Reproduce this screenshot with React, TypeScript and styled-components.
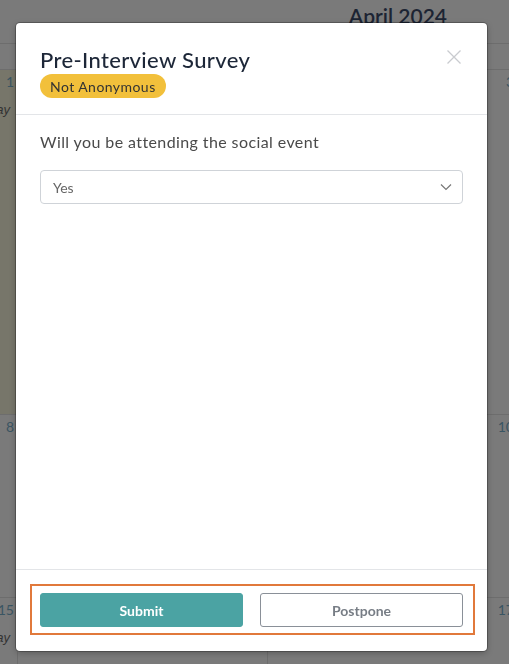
import React from "react";
import styled, { createGlobalStyle } from "styled-components";

const GlobalStyle = createGlobalStyle`
  html, body { margin: 0; padding: 0; }
  body {
    background: #7a7a7a;
    font-family: Lato, "Liberation Sans", Arial, sans-serif;
    overflow: hidden;
  }
  * { box-sizing: border-box; }
`;

const Page = styled.div`
  width: 509px;
  height: 664px;
  overflow: hidden;
  background: #7a7a7a;
`;

const CalTitleBar = styled.div`
  height: 44px;
  border-bottom: 1px solid #6d6d6d;
  display: flex;
  justify-content: flex-end;
  align-items: flex-start;
  padding: 3px 62px 0 0;
`;

const CalTitle = styled.div`
  font-family: Lato, "Liberation Sans", sans-serif;
  font-size: 21px;
  font-weight: 600;
  color: #1c2433;
`;

const WeekdayRow = styled.div`
  height: 26px;
  border-bottom: 1px solid #6d6d6d;
`;

const Grid = styled.div`
  display: grid;
  grid-template-columns: repeat(3, 250px);
  grid-template-rows: 345px 183px 120px;
  margin-left: -232px;
`;

const Cell = styled.div<{ $hl?: boolean }>`
  background: ${(p) => (p.$hl ? "#77766a" : "transparent")};
  border-right: 1px solid #6d6d6d;
  border-bottom: 1px solid #6d6d6d;
  display: flex;
  flex-direction: column;
  align-items: flex-end;
  padding: 3px 3px 0 0;
  gap: 12px;
`;

const DayNum = styled.span`
  font-family: Lato, "Liberation Sans", sans-serif;
  font-size: 14px;
  color: #3a5562;
`;

const DayLabel = styled.span`
  font-family: "Liberation Sans", Arial, sans-serif;
  font-style: italic;
  font-size: 13px;
  color: #333;
  margin-right: 4px;
`;

const Overlay = styled.div`
  position: fixed;
  inset: 0;
  padding: 23px 22px 13px 16px;
  display: flex;
`;

const Modal = styled.div`
  flex: 1;
  background: #fff;
  border-radius: 4px;
  box-shadow: 0 0 0 1px rgba(0, 0, 0, 0.25), 0 2px 6px rgba(0, 0, 0, 0.25);
  display: flex;
  flex-direction: column;
  overflow: hidden;
`;

const Header = styled.div`
  display: flex;
  justify-content: space-between;
  align-items: flex-start;
  padding: 23px 26px 16px 24px;
  border-bottom: 1px solid #e3e5e8;
`;

const HeaderText = styled.div`
  display: flex;
  flex-direction: column;
  align-items: flex-start;
`;

const Title = styled.h2`
  margin: 0;
  font-family: Lato, "Liberation Sans", sans-serif;
  font-size: 22px;
  line-height: 28px;
  font-weight: 500;
  letter-spacing: 0.35px;
  color: #1d2738;
`;

const Badge = styled.span`
  display: inline-flex;
  align-items: center;
  height: 24px;
  padding: 0 10px;
  border-radius: 12px;
  background: #f2c03b;
  font-family: Lato, "Liberation Sans", sans-serif;
  font-size: 14px;
  letter-spacing: 0.45px;
  color: #333;
`;

const CloseButton = styled.button`
  border: none;
  background: none;
  padding: 0;
  margin-top: 4px;
  width: 14px;
  height: 14px;
  cursor: pointer;
  display: flex;
`;

const Body = styled.div`
  flex: 1;
  padding: 17px 24px 0 24px;
  display: flex;
  flex-direction: column;
  gap: 18px;
`;

const Question = styled.div`
  font-family: Lato, "Liberation Sans", sans-serif;
  font-size: 16px;
  line-height: 20px;
  letter-spacing: 0.4px;
  color: #4a4a4a;
`;

const Select = styled.div`
  height: 34px;
  border: 1px solid #cfd3d8;
  border-radius: 4px;
  display: flex;
  align-items: center;
  justify-content: space-between;
  padding: 0 10px 0 12px;
  font-family: Lato, "Liberation Sans", sans-serif;
  font-size: 14px;
  color: #666;
`;

const Footer = styled.div`
  border-top: 1px solid #e3e5e8;
  padding: 14px 12px 16px 14px;
`;

const Highlight = styled.div`
  border: 2px solid #e1793b;
  padding: 7px 10px 6px 8px;
  display: flex;
  gap: 17px;
`;

const Button = styled.button<{ $primary?: boolean }>`
  flex: 1;
  height: 34px;
  border-radius: 3px;
  font-family: Lato, "Liberation Sans", sans-serif;
  font-size: 14px;
  font-weight: 700;
  cursor: pointer;
  background: ${(p) => (p.$primary ? "#4ba3a3" : "#fff")};
  color: ${(p) => (p.$primary ? "#fff" : "#777d85")};
  border: 1px solid ${(p) => (p.$primary ? "#4ba3a3" : "#8a9098")};
`;

const cells: { n?: string; label?: string; hl?: boolean }[] = [
  { n: "1", label: "Holiday", hl: true },
  { n: "2" },
  { n: "3" },
  { n: "8" },
  { n: "9" },
  { n: "10" },
  { n: "15", label: "Holiday" },
  { n: "16" },
  { n: "17" },
];

export default function App() {
  return (
    <>
      <GlobalStyle />
      <Page>
        <CalTitleBar>
          <CalTitle>April 2024</CalTitle>
        </CalTitleBar>
        <WeekdayRow />
        <Grid>
          {cells.map((c, i) => (
            <Cell key={i} $hl={c.hl}>
              <DayNum>{c.n}</DayNum>
              {c.label && <DayLabel>{c.label}</DayLabel>}
            </Cell>
          ))}
        </Grid>
      </Page>
      <Overlay>
        <Modal>
          <Header>
            <HeaderText>
              <Title>Pre-Interview Survey</Title>
              <Badge>Not Anonymous</Badge>
            </HeaderText>
            <CloseButton aria-label="Close">
              <svg width="14" height="14" viewBox="0 0 14 14">
                <path d="M0.5 0.5 L13.5 13.5 M13.5 0.5 L0.5 13.5" stroke="#c9cbcf" strokeWidth="1.3" fill="none" />
              </svg>
            </CloseButton>
          </Header>
          <Body>
            <Question>Will you be attending the social event</Question>
            <Select>
              <span>Yes</span>
              <svg width="12" height="8" viewBox="0 0 12 8">
                <path d="M1 1.5 L6 6.5 L11 1.5" stroke="#777" strokeWidth="1.2" fill="none" />
              </svg>
            </Select>
          </Body>
          <Footer>
            <Highlight>
              <Button $primary>Submit</Button>
              <Button>Postpone</Button>
            </Highlight>
          </Footer>
        </Modal>
      </Overlay>
    </>
  );
}
